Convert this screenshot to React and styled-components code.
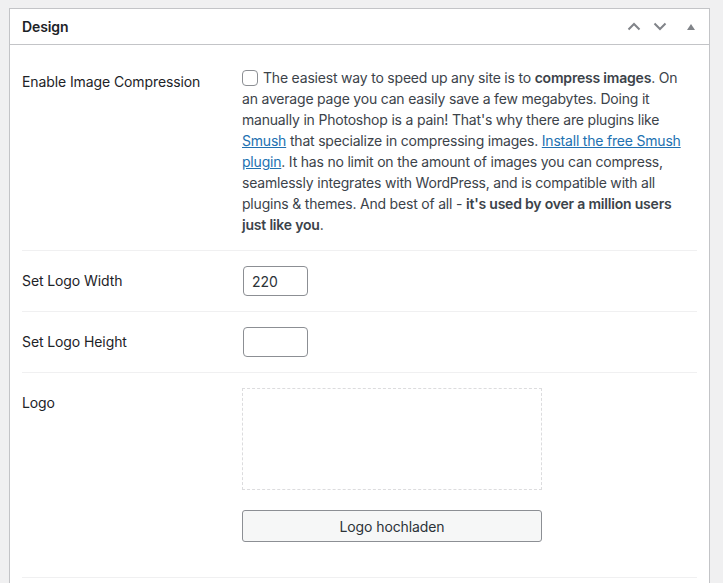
import React from "react";
import styled, { createGlobalStyle } from "styled-components";

const Global = createGlobalStyle`
  html, body { margin: 0; padding: 0; background: #f0f0f1; }
  body { font-family: Inter, "Noto Sans", sans-serif; color: #3c434a; font-size: 14px; }
  * { box-sizing: border-box; }
`;

const Page = styled.div`
  padding: 8px 13px 0 9px;
  height: 583px;
  overflow: hidden;
`;

const Postbox = styled.div`
  background: #fff;
  border: 1px solid #c3c4c7;
  min-height: 640px;
`;

const Header = styled.div`
  display: flex;
  align-items: center;
  height: 36px;
  border-bottom: 1px solid #c3c4c7;
  padding: 0 0 0 12px;
`;

const Title = styled.h2`
  flex: 1;
  margin: 0;
  font-size: 14px;
  font-weight: 600;
  color: #1d2327;
  letter-spacing: -0.1px;
`;

const Actions = styled.div`
  display: flex;
  align-items: center;
`;

const HandleButton = styled.button`
  width: ${(p) => p.$w || 26}px;
  height: 36px;
  border: 0;
  background: none;
  padding: 0;
  display: flex;
  align-items: center;
  justify-content: center;
  color: #818489;
`;

const Inside = styled.div`
  padding: 7px 12px 12px;
`;

const Table = styled.div`
  display: grid;
  grid-template-columns: 210px 1fr;
`;

const Row = styled.div`
  display: contents;
`;

const Th = styled.div`
  padding: 21px 10px 19px 0;
  font-size: 14px;
  line-height: 1.3;
  color: #1d2327;
  border-bottom: 1px solid #f0f0f1;
  letter-spacing: -0.1px;
`;

const Td = styled.div`
  padding: 15px 10px;
  font-size: 14px;
  line-height: 21px;
  border-bottom: 1px solid #f0f0f1;
  letter-spacing: -0.2px;
`;

const Check = styled.span`
  display: inline-block;
  width: 16px;
  height: 16px;
  border: 1px solid #8c8f94;
  border-radius: 4px;
  vertical-align: -3px;
  margin-right: 5px;
  background: #fff;
`;

const Link = styled.a`
  color: #2271b1;
  text-decoration: underline;
`;

const Strong = styled.strong`
  font-weight: 600;
  color: #3c434a;
`;

const Input = styled.input`
  width: 65px;
  height: 30px;
  border: 1px solid #8c8f94;
  border-radius: 4px;
  padding: 0 8px;
  font: inherit;
  font-size: 14px;
  color: #2c3338;
  background: #fff;
  display: block;
  margin-left: 1px;
`;

const Preview = styled.div`
  width: 300px;
  height: 102px;
  border: 1px dashed #dcdcde;
`;

const UploadButton = styled.button`
  display: block;
  width: 300px;
  height: 32px;
  margin: 20px 0 20px;
  background: #f6f7f7;
  border: 1px solid #8c8f94;
  border-radius: 3px;
  font: inherit;
  font-size: 14px;
  color: #2c3338;
  letter-spacing: -0.1px;
`;

export default function App() {
  return (
    <>
      <Global />
      <Page>
        <Postbox>
          <Header>
            <Title>Design</Title>
            <Actions>
              <HandleButton aria-label="up">
                <svg width="14" height="9" viewBox="0 0 14 9" fill="none" stroke="currentColor" strokeWidth="2">
                  <path d="M1.5 7.5 L7 2 L12.5 7.5" />
                </svg>
              </HandleButton>
              <HandleButton aria-label="down">
                <svg width="14" height="9" viewBox="0 0 14 9" fill="none" stroke="currentColor" strokeWidth="2">
                  <path d="M1.5 1.5 L7 7 L12.5 1.5" />
                </svg>
              </HandleButton>
              <HandleButton $w={36} aria-label="toggle">
                <svg width="8" height="6" viewBox="0 0 8 6" fill="currentColor">
                  <path d="M4 0 L8 6 L0 6 Z" />
                </svg>
              </HandleButton>
            </Actions>
          </Header>
          <Inside>
            <Table>
              <Row>
                <Th>Enable Image Compression</Th>
                <Td>
                  <Check />
                  The easiest way to speed up any site is to <Strong>compress images</Strong>. On an
                  average page you can easily save a few megabytes. Doing it manually in Photoshop
                  is a pain! That's why there are plugins like <Link href="#">Smush</Link> that
                  specialize in compressing images. <Link href="#">Install the free Smush plugin</Link>.
                  It has no limit on the amount of images you can compress, seamlessly integrates
                  with WordPress, and is compatible with all plugins &amp; themes. And best of all -{" "}
                  <Strong>it's used by over a million users just like you</Strong>.
                </Td>
              </Row>
              <Row>
                <Th>Set Logo Width</Th>
                <Td>
                  <Input defaultValue="220" />
                </Td>
              </Row>
              <Row>
                <Th>Set Logo Height</Th>
                <Td>
                  <Input defaultValue="" />
                </Td>
              </Row>
              <Row>
                <Th>Logo</Th>
                <Td>
                  <Preview />
                  <UploadButton>Logo hochladen</UploadButton>
                </Td>
              </Row>
            </Table>
          </Inside>
        </Postbox>
      </Page>
    </>
  );
}
